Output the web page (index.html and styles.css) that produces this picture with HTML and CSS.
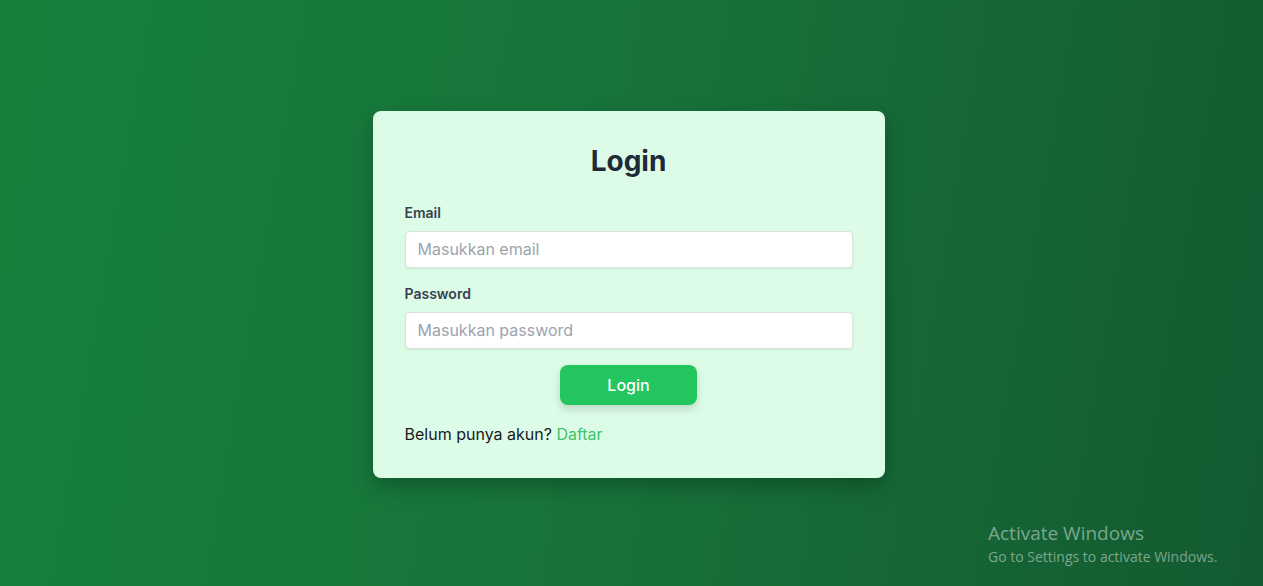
FILE: index.html
```html
<!DOCTYPE html>
<html lang="id">
<head>
<meta charset="utf-8">
<title>Login</title>
<link rel="stylesheet" href="styles.css">
</head>
<body>
<main class="page">
  <form class="card">
    <h1 class="title">Login</h1>
    <div class="field">
      <label class="label" for="email">Email</label>
      <input class="input" id="email" type="email" placeholder="Masukkan email">
    </div>
    <div class="field">
      <label class="label" for="password">Password</label>
      <input class="input" id="password" type="password" placeholder="Masukkan password">
    </div>
    <div class="actions">
      <button class="btn" type="button">Login</button>
    </div>
    <p class="register">Belum punya akun? <a class="link" href="#">Daftar</a></p>
  </form>
</main>
<div class="watermark">
  <div class="wm-title">Activate Windows</div>
  <div class="wm-sub">Go to Settings to activate Windows.</div>
</div>
</body>
</html>
```
FILE: styles.css
```css
* { box-sizing: border-box; }
html, body { margin: 0; padding: 0; height: 100%; }
body {
  font-family: Inter, "Noto Sans", sans-serif;
  background: linear-gradient(100deg, #16803c 0%, #17743b 45%, #135a30 100%);
  overflow: hidden;
}
.page {
  min-height: 100vh;
  display: flex;
  align-items: center;
  justify-content: center;
  padding-right: 6px;
  padding-top: 2px;
}
.card {
  width: 512px;
  background: #dcfce7;
  border-radius: 8px;
  padding: 32px;
  box-shadow: 0 8px 20px rgba(0,0,0,0.25);
  margin: 0;
}
.title {
  margin: 0 0 24px;
  text-align: center;
  font-size: 28px;
  line-height: 36px;
  font-weight: 700;
  color: #1f2937;
}
.field { margin-bottom: 16px; }
.label {
  display: block;
  font-size: 14px;
  line-height: 20px;
  font-weight: 600;
  color: #374151;
  margin-bottom: 8px;
}
.input {
  display: block;
  width: 100%;
  height: 37px;
  padding: 0 12px;
  font-family: inherit;
  font-size: 16px;
  color: #111827;
  background: #fff;
  border: 1px solid #d9e3dc;
  border-radius: 4px;
  box-shadow: 0 1px 2px rgba(0,0,0,0.08);
  outline: none;
}
.input::placeholder { color: #9ca3af; }
.actions { display: flex; justify-content: center; }
.btn {
  width: 137px;
  height: 40px;
  border: none;
  border-radius: 8px;
  background: #22c55e;
  color: #fff;
  font-family: inherit;
  font-size: 16px;
  font-weight: 500;
  box-shadow: 0 4px 8px rgba(0,0,0,0.15);
  cursor: pointer;
}
.register {
  margin: 17px 0 0;
  font-size: 16px;
  line-height: 24px;
  color: #1a1a1a;
}
.link { color: #3fc46b; text-decoration: none; }
.watermark {
  position: absolute;
  left: 988px;
  top: 521px;
  font-family: "Open Sans", "Noto Sans", sans-serif;
  color: rgba(255,255,255,0.45);
}
.wm-title { font-size: 19px; line-height: 24px; }
.wm-sub { font-size: 14px; line-height: 20px; margin-top: 2px; }
```
